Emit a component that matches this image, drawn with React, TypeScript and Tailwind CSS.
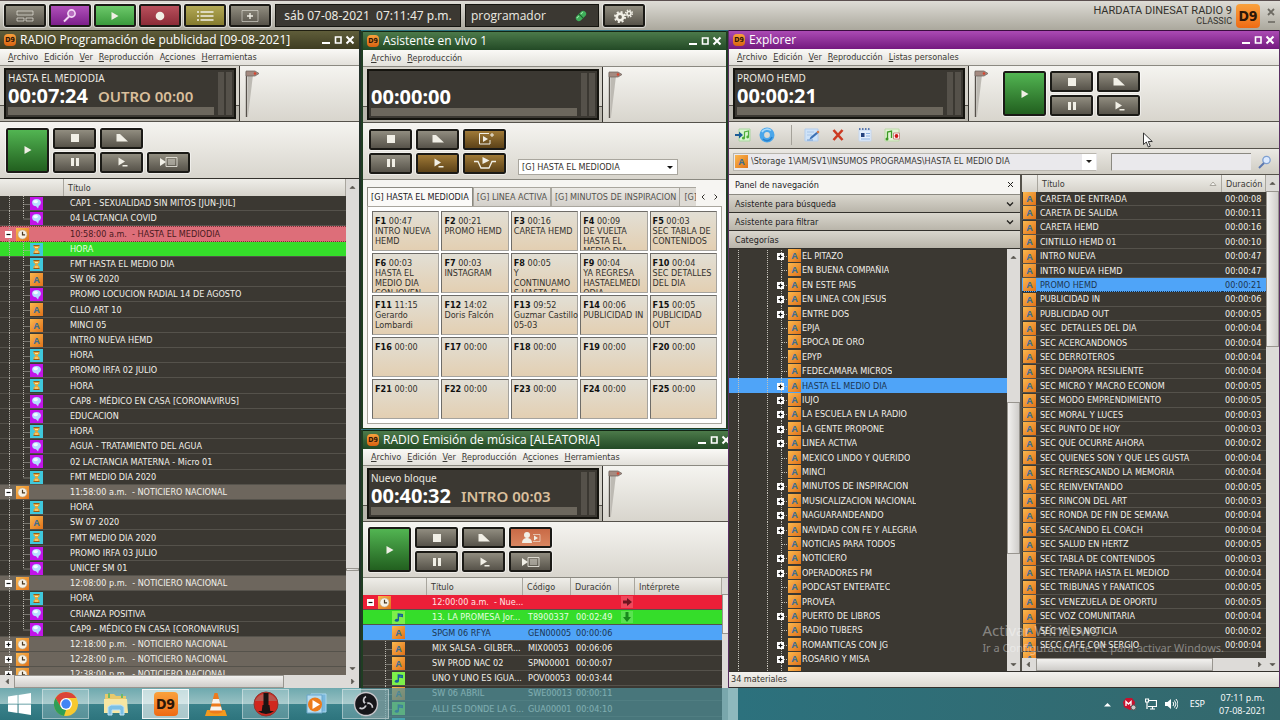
import React from "react";

const TAHOMA = "font-['DejaVu_Sans_Condensed','DejaVu_Sans',sans-serif]";
const SEGOE = "font-['Noto_Sans','Open_Sans',sans-serif]";

type Kind = "a" | "talk" | "hour" | "clock" | "music";

/* ---------- small drawings ---------- */

function Badge({ kind, x = 0, y = 0 }: { kind: Kind; x?: number; y?: number }) {
  const fill = { a: "url(#gOrange)", clock: "url(#gOrange)", talk: "#c214e8", hour: "#3fc8dc", music: "#7df04a" }[kind];
  return (
    <g transform={`translate(${x} ${y})`}>
      <rect width="13" height="13" fill={fill} />
      {kind === "a" && (
        <text x="6.5" y="10" textAnchor="middle" fontSize="9" fontWeight="700" fill="#3f6e92" fontFamily="Open Sans, sans-serif">
          A
        </text>
      )}
      {kind === "talk" && (
        <>
          <ellipse cx="6.5" cy="5.6" rx="4.4" ry="3.7" fill="#b4dcff" />
          <path d="M5.500 8.500h3.500l-1 3z" fill="#b4dcff" />
          <ellipse cx="5.6" cy="4.600" rx="2.400" ry="1.700" fill="#f2fbff" />
        </>
      )}
      {kind === "hour" && (
        <>
          <path d="M3.5 2.5h6v2L7.4 6.5l2.1 2v2h-6v-2l2.1-2-2.1-2z" fill="#e8a63a" />
          <path d="M3.5 2.5h6M3.5 10.5h6" stroke="#9a5a14" />
          <path d="M5 4.5h3M5 9h3" stroke="#ffe59a" />
        </>
      )}
      {kind === "clock" && (
        <>
          <circle cx="6.5" cy="6.5" r="4.5" fill="#f6f1e6" stroke="#b9a98c" strokeWidth=".6" />
          <path d="M6.5 3.8v3h2.6" stroke="#4a3820" strokeWidth="1.2" fill="none" />
        </>
      )}
      {kind === "music" && (
        <>
          <ellipse cx="4.8" cy="9.2" rx="2" ry="1.5" fill="#17609a" />
          <path d="M6.3 9V3l4 .5v2L7 4.8" stroke="#17609a" strokeWidth="1.4" fill="none" />
        </>
      )}
    </g>
  );
}

function SharedGradients() {
  return (
    <svg width="0" height="0" className="absolute" aria-hidden="true">
      <defs>
        <linearGradient id="gOrange" x1="0" y1="0" x2="1" y2="1">
          <stop offset="0" stopColor="#fbb84e" />
          <stop offset="1" stopColor="#e0721a" />
        </linearGradient>
      </defs>
    </svg>
  );
}

function Expander({ x, y, open }: { x: number; y: number; open: boolean }) {
  return (
    <g transform={`translate(${x} ${y})`}>
      <rect width="7" height="7" fill="#fff" />
      <path d={open ? "M1.5 3.5h4" : "M1.5 3.5h4M3.5 1.5v4"} stroke="#111" strokeWidth="1.2" />
    </g>
  );
}

function D9({ big = false }: { big?: boolean }) {
  return (
    <span
      aria-hidden="true"
      className={
        big
          ? "flex size-6 items-center justify-center rounded-sm bg-linear-to-b from-[#f9a13c] to-[#ef6a12] text-sm leading-4 font-bold text-[#2b1608] font-['DejaVu_Sans_Condensed',sans-serif]"
          : "flex size-3 items-center justify-center rounded-sm bg-linear-to-b from-[#f9a13c] to-[#d8620f] text-[7px] leading-3 font-bold text-[#2b1608] font-['DejaVu_Sans_Condensed',sans-serif]"
      }
    >
      D9
    </span>
  );
}

function Glyph({ name }: { name: string }) {
  const c = "#f1efe6";
  return (
    <svg width="24" height="16" viewBox="0 0 24 16" fill="none" aria-hidden="true">
      {name === "play" && <path d="M8.5 4l7 4-7 4z" fill={c} />}
      {name === "stop" && <path d="M8 4h8v8H8z" fill={c} />}
      {name === "fade" && <path d="M6.500 4l3.500 0 8 7.500H6.500z" fill={c} />}
      {name === "pause" && <path d="M8 4h3v8H8zM13 4h3v8h-3z" fill={c} />}
      {name === "next" && <path d="M8.500 3.500l6.500 4-6.500 4zM12.500 11h5v1.500h-5z" fill={c} />}
      {name === "list" && (
        <>
          <path d="M3 4l6 4-6 4z" fill={c} />
          <path d="M9 3.500h11v9H9zM11 6h7M11 8h7M11 10h7" stroke={c} strokeOpacity=".8" />
        </>
      )}
      {name === "frame" && (
        <>
          <path d="M16 2.500H6.500v10.500h10.500V9" stroke={c} />
          <path d="M10 5l5 3-5 3z" fill={c} />
          <path d="M17 4h4M19 2v4" stroke={c} />
        </>
      )}
      {name === "duck" && (
        <>
          <path d="M1 6.500h4l3 6.500h8l3-6.500h4" stroke={c} strokeWidth="1.300" />
          <path d="M9.500 2l7 3.500-7 3.500z" fill={c} />
        </>
      )}
      {name === "voice" && (
        <>
          <circle cx="8" cy="5" r="3" fill={c} />
          <path d="M3 13c0-4 3-5 5-5s5 1 5 5z" fill={c} />
          <path d="M14 4.500h7v7h-7" stroke={c} strokeOpacity=".6" />
          <path d="M15 5.500l4 2.500-4 2.500z" fill={c} />
        </>
      )}
      {name === "layout" && <path d="M4 3h16v4H4zM4 10h7v3H4zM13 10h7v3h-7z" stroke={c} strokeOpacity=".65" />}
      {name === "search" && (
        <>
          <circle cx="13.500" cy="5.500" r="3.600" stroke="#f3d9f5" strokeWidth="1.600" fill="#b86cc0" />
          <path d="M11 8.500l-5 5" stroke="#f3d9f5" strokeWidth="2" />
        </>
      )}
      {name === "record" && <circle cx="12" cy="8" r="4.300" fill={c} />}
      {name === "lines" && <path d="M4 4h2M4 8h2M4 12h2M7.500 4h13M7.500 8h13M7.500 12h13" stroke={c} strokeWidth="1.500" />}
      {name === "plus" && (
        <>
          <path d="M4 2.500h16v11H4z" stroke={c} strokeOpacity=".55" />
          <path d="M9 8h6M12 5v6" stroke={c} strokeWidth="1.400" />
        </>
      )}
      {name === "gears" && (
        <>
          <circle cx="8" cy="9" r="3.200" stroke={c} strokeWidth="2.600" />
          <circle cx="8" cy="9" r="5" stroke={c} strokeWidth="2" strokeDasharray="2 1.930" />
          <circle cx="17" cy="5.500" r="2" stroke={c} strokeWidth="1.600" />
          <circle cx="17" cy="5.500" r="3.400" stroke={c} strokeWidth="1.400" strokeDasharray="1.400 1.270" />
        </>
      )}
    </svg>
  );
}

function WindowGlyph({ name }: { name: "min" | "max" | "close" }) {
  return (
    <svg width="10" height="10" viewBox="0 0 10 10" fill="none" stroke="#fff" aria-hidden="true">
      {name === "min" && <path d="M1 8h8" strokeWidth="2" />}
      {name === "max" && <path d="M2.500 2h5.500v6H2.500z" strokeWidth="1.600" />}
      {name === "close" && <path d="M1.500 1.500l7 7M8.500 1.500l-7 7" strokeWidth="2" />}
    </svg>
  );
}

function Pendulum() {
  return (
    <svg width="16" height="50" viewBox="0 0 16 50" aria-hidden="true">
      <path d="M4 6h5L4 47z" fill="#bdbab3" />
      <path d="M2.500 3v45" stroke="#55504a" strokeWidth="1.400" />
      <path d="M2 2h9l4 2.500L11 7H2z" fill="#a48a80" stroke="#6b605a" strokeWidth=".7" />
      <circle cx="11" cy="4.500" r="1.300" fill="#d8452f" />
    </svg>
  );
}

/* ---------- window parts ---------- */

const tones = {
  gray: "from-[#918d80] to-[#57534a]",
  green: "from-[#52b552] to-[#22601f]",
  lime: "from-[#6cc96a] to-[#3a9a3c]",
  purple: "from-[#b04fba] to-[#7d1f8c]",
  red: "from-[#b9505c] to-[#8c2b38]",
  olive: "from-[#b3a955] to-[#857b2e]",
  brown: "from-[#a07a37] to-[#5c4218]",
  salmon: "from-[#c96a46] to-[#d98660]",
};

function Key({ icon, label, tone = "gray", size = "h-[21px] w-[43px]" }: { icon: string; label: string; tone?: keyof typeof tones; size?: string }) {
  return (
    <button
      type="button"
      aria-label={label}
      className={`flex shrink-0 items-center justify-center rounded-xs border-2 border-[#1b1a16] bg-linear-to-b outline outline-white/50 ${tones[tone]} ${size}`}
    >
      <Glyph name={icon} />
    </button>
  );
}

const BIG = "row-span-2 h-[45px] w-[43px]";
const KEYPAD = "grid grid-flow-col grid-rows-2 gap-x-1 gap-y-[3px]";

function TitleBar({ text, color }: { text: string; color: string }) {
  return (
    <header className={`flex h-[19px] shrink-0 items-center gap-1 border-t border-black/50 bg-linear-to-b px-1 text-white ${color}`}>
      <D9 />
      <h2 className="flex-1 truncate font-['Open_Sans','Noto_Sans',sans-serif] text-xs leading-[18px]">{text}</h2>
      <div className="flex gap-0.5">
        {(["min", "max", "close"] as const).map((n) => (
          <button key={n} type="button" aria-label={{ min: "Minimizar", max: "Maximizar", close: "Cerrar" }[n]}>
            <WindowGlyph name={n} />
          </button>
        ))}
      </div>
    </header>
  );
}

function MenuBar({ items }: { items: [string, string, string][] }) {
  return (
    <nav className="flex h-[17px] shrink-0 items-center gap-1.5 border-b border-[#8b8981] bg-linear-to-b from-[#faf9f6] to-[#e3e1db] pl-2 text-[9px] leading-3 text-[#3a3935]">
      {items.map(([before, key, after]) => (
        <button key={before + key + after} type="button">
          {before}
          <u>{key}</u>
          {after}
        </button>
      ))}
    </nav>
  );
}

const radioMenu: [string, string, string][] = [
  ["", "A", "rchivo"],
  ["", "E", "dición"],
  ["", "V", "er"],
  ["", "R", "eproducción"],
  ["A", "c", "ciones"],
  ["", "H", "erramientas"],
];

function Display({ title, time, cue, children }: { title: string; time: string; cue?: string; children?: React.ReactNode }) {
  return (
    <div className="flex h-14 shrink-0 border-b border-[#55524b] bg-linear-to-b from-[#f5f4f0] to-[#d8d5cd]">
      <div className="flex w-60 shrink-0 border-r border-[#33312c] bg-[linear-gradient(#d5d2ca_0_39px,#55524b_39px_40px,#b9b6ad_40px)] py-0.5 pr-[3px] pl-1">
        <div className={`flex flex-1 gap-0.5 border-2 border-[#15140f] bg-[#3b3832] p-0.5 pt-0 ${SEGOE}`}>
          <div className="flex min-w-0 flex-1 flex-col">
            <p className="h-4 truncate text-[10px] leading-4 text-[#eceae2]">{title}</p>
            <p className="flex h-5 items-center gap-2.5 leading-5 font-bold">
              <span className="text-xl leading-5 text-white">{time}</span>
              {cue && <span className="text-[15px] leading-5 font-semibold text-[#d9bf9c]">{cue}</span>}
            </p>
            <div className="mt-auto h-2 bg-[#6c675d]" />
          </div>
          <div className="mt-0.5 ml-0.5 w-1.5 bg-[#55514a]" />
          <div className="mt-0.5 w-1.5 bg-[#55514a]" />
        </div>
      </div>
      <div className="pt-[3px] pl-1">
        <Pendulum />
      </div>
      {children}
    </div>
  );
}

function ArrowMark({ dir }: { dir: "up" | "down" | "left" | "right" }) {
  const d = { up: "M2 5.500L4.500 3 7 5.500z", down: "M2 3.500L4.500 6 7 3.500z", left: "M5.500 2L3 4.500 5.500 7z", right: "M3.500 2L6 4.500 3.500 7z" }[dir];
  return (
    <svg width="9" height="9" viewBox="0 0 9 9" aria-hidden="true">
      <path d={d} fill="#57544d" stroke="#57544d" strokeWidth=".6" />
    </svg>
  );
}

function VScroll({ before, thumb, after }: { before: string; thumb: string; after: string }) {
  return (
    <div className="flex w-[13px] shrink-0 flex-col items-center bg-[#dddbd8]">
      <div className="flex h-4 shrink-0 items-center">
        <ArrowMark dir="up" />
      </div>
      <div className={before} />
      <div className={`w-full border border-[#98958f] bg-linear-to-r from-[#f2f1ef] to-[#cfcdca] ${thumb}`} />
      <div className={after} />
      <div className="flex h-3.5 shrink-0 items-center">
        <ArrowMark dir="down" />
      </div>
    </div>
  );
}

function HScroll({ thumb, rest }: { thumb: string; rest: string }) {
  return (
    <div className="flex h-[13px] shrink-0 items-center bg-[#dddbd8]">
      <div className="flex w-3.5 shrink-0 justify-center">
        <ArrowMark dir="left" />
      </div>
      <div className={`h-full border border-[#98958f] bg-linear-to-b from-[#f2f1ef] to-[#cfcdca] ${thumb}`} />
      <div className={rest} />
      <div className="flex w-3.5 shrink-0 justify-center">
        <ArrowMark dir="right" />
      </div>
    </div>
  );
}

const TH = "border-r border-[#a9a69e] p-0 pl-1 text-left text-[9px] leading-3 font-normal text-[#3a3935]";
const THEAD = "h-[17px] bg-linear-to-b from-[#efeee9] to-[#d5d2ca]";
const ROW15 = "h-[15px] nth-[5n+3]:h-4";
const ROW14 = "h-3.5 nth-[5n+3]:h-[15px] nth-[5n]:h-[15px]";
const DARK = "bg-[#3b3832] text-[#f2f0ea]";

/* ---------- advertising schedule ---------- */

type AdRow = { kind: Kind; text: string; group?: "open" | "closed"; look?: "current" | "playing"; last?: boolean };

const ads: AdRow[] = [
  { kind: "talk", text: "CAP1 - SEXUALIDAD SIN MITOS [JUN-JUL]" },
  { kind: "talk", text: "04 LACTANCIA COVID", last: true },
  { kind: "clock", text: "10:58:00 a.m.  - HASTA EL MEDIODIA", group: "open", look: "current" },
  { kind: "hour", text: "HORA", look: "playing" },
  { kind: "hour", text: "FMT HASTA EL MEDIO DIA" },
  { kind: "a", text: "SW 06 2020" },
  { kind: "talk", text: "PROMO LOCUCION RADIAL 14 DE AGOSTO" },
  { kind: "a", text: "CLLO ART 10" },
  { kind: "a", text: "MINCI 05" },
  { kind: "a", text: "INTRO NUEVA HEMD" },
  { kind: "hour", text: "HORA" },
  { kind: "talk", text: "PROMO IRFA 02 JULIO" },
  { kind: "hour", text: "HORA" },
  { kind: "talk", text: "CAP8 - MÉDICO EN CASA [CORONAVIRUS]" },
  { kind: "talk", text: "EDUCACION" },
  { kind: "hour", text: "HORA" },
  { kind: "talk", text: "AGUA - TRATAMIENTO DEL AGUA" },
  { kind: "talk", text: "02 LACTANCIA MATERNA - Micro 01" },
  { kind: "hour", text: "FMT MEDIO DIA 2020", last: true },
  { kind: "clock", text: "11:58:00 a.m.  - NOTICIERO NACIONAL", group: "open" },
  { kind: "hour", text: "HORA" },
  { kind: "a", text: "SW 07 2020" },
  { kind: "hour", text: "FMT MEDIO DIA 2020" },
  { kind: "talk", text: "PROMO IRFA 03 JULIO" },
  { kind: "talk", text: "UNICEF SM 01", last: true },
  { kind: "clock", text: "12:08:00 p.m.  - NOTICIERO NACIONAL", group: "open" },
  { kind: "hour", text: "HORA" },
  { kind: "talk", text: "CRIANZA POSITIVA" },
  { kind: "talk", text: "CAP9 - MÉDICO EN CASA [CORONAVIRUS]", last: true },
  { kind: "clock", text: "12:18:00 p.m.  - NOTICIERO NACIONAL", group: "closed" },
  { kind: "clock", text: "12:28:00 p.m.  - NOTICIERO NACIONAL", group: "closed" },
  { kind: "clock", text: "12:38:00 p.m.  - NOTICIERO NACIONAL", group: "closed" },
];

function adRowColor(r: AdRow) {
  if (r.look === "current") return "bg-[#dd6e79] text-[#4a1a20]";
  if (r.look === "playing") return "bg-[#35dd2a] text-[#e6ffe0]";
  if (r.group) return "bg-[#6d665d] text-[#f2f0ea]";
  return DARK;
}

function AdsWindow() {
  return (
    <section className="mb-8 flex min-h-0 min-w-0 flex-col border-r-2 border-[#23302a] bg-[#dddbd8]">
      <TitleBar text="RADIO Programación de publicidad [09-08-2021]" color="from-[#5f5d3a] to-[#3f3d22]" />
      <MenuBar items={radioMenu} />
      <Display title="HASTA EL MEDIODIA" time="00:07:24" cue="OUTRO 00:00" />
      <div className="flex h-[57px] shrink-0 items-center border-b border-[#33312c] bg-linear-to-b from-[#f5f4f0] to-[#d8d5cd] pl-1.5">
        <div className={KEYPAD}>
          <Key icon="play" label="Reproducir" tone="green" size={BIG} />
          <Key icon="stop" label="Detener" />
          <Key icon="pause" label="Pausa" />
          <Key icon="fade" label="Fundir" />
          <Key icon="next" label="Siguiente" />
          <span />
          <Key icon="list" label="Reproducir lista" />
        </div>
      </div>
      <div className="flex min-h-0 flex-1">
        <div className="min-w-0 flex-1 overflow-hidden bg-[#3b3832]">
          <table className="w-full table-fixed border-separate border-spacing-0 text-[9px] leading-3">
            <colgroup>
              <col className="w-16" />
              <col />
            </colgroup>
            <thead>
              <tr className={THEAD}>
                <th className={TH} aria-label="Tipo" />
                <th className={TH}>Título</th>
              </tr>
            </thead>
            <tbody>
              {ads.map((r, i) => (
                <tr key={i} className={`${ROW15} ${adRowColor(r)}`}>
                  <td className={`p-0 ${r.look === "current" ? "border-y border-dotted border-[#7a3038]" : "border-b border-[#55524b]"}`}>
                    <svg width="64" height="13" viewBox="0 0 64 13" className="block overflow-visible" aria-hidden="true">
                      <g stroke="#b5b2aa" strokeDasharray="1 1">
                        <path d="M9.500 -1v16" />
                        {!r.group && <path d={r.last ? "M23.500 -1v8h7" : "M23.500 -1v16M23.500 7.500h7"} fill="none" />}
                      </g>
                      {r.group && <Expander x={5} y={3} open={r.group === "open"} />}
                      <Badge kind={r.kind} x={r.group ? 16 : 30} />
                    </svg>
                  </td>
                  <td className={`truncate p-0 pl-1.5 leading-3 whitespace-pre ${r.look === "current" ? "border-y border-dotted border-[#7a3038]" : "border-b border-[#55524b]"}`}>{r.text}</td>
                </tr>
              ))}
            </tbody>
          </table>
        </div>
        <VScroll before="flex-[372]" thumb="h-[3px]" after="flex-[90]" />
      </div>
      <HScroll thumb="flex-[270]" rest="flex-[62]" />
    </section>
  );
}

/* ---------- live assistant ---------- */

const pads: [string, string, string][] = [
  ["F1", "00:47", "INTRO NUEVA\nHEMD"],
  ["F2", "00:21", "PROMO HEMD"],
  ["F3", "00:16", "CARETA HEMD"],
  ["F4", "00:09", "DE VUELTA\nHASTA EL\nMEDIO DIA"],
  ["F5", "00:03", "SEC TABLA DE\nCONTENIDOS"],
  ["F6", "00:03", "HASTA EL\nMEDIO DIA\nCON JOVEN"],
  ["F7", "00:03", "INSTAGRAM"],
  ["F8", "00:05", "Y\nCONTINUAMO\nS HASTA EL"],
  ["F9", "00:04", "YA REGRESA\nHASTAELMEDI\nODIA"],
  ["F10", "00:04", "SEC DETALLES\nDEL DIA"],
  ["F11", "11:15", "Gerardo\nLombardi"],
  ["F12", "14:02", "Doris Falcón"],
  ["F13", "09:52", "Guzmar Castillo\n05-03"],
  ["F14", "00:06", "PUBLICIDAD IN"],
  ["F15", "00:05", "PUBLICIDAD\nOUT"],
  ...Array.from({ length: 10 }, (_, i): [string, string, string] => [`F${16 + i}`, "00:00", ""]),
];

function AssistantWindow() {
  const tab = "shrink-0 border border-b-0 border-[#a9a69e] bg-linear-to-b from-[#eceae6] to-[#d3d0ca] px-[3px] text-[#55534e]";
  return (
    <section className="mt-px flex shrink-0 flex-col border-x-2 border-b border-[#1f3d22] bg-[#f6f5f2]">
      <TitleBar text="Asistente en vivo 1" color="from-[#4c7a4a] to-[#234a26]" />
      <MenuBar items={[["", "A", "rchivo"], ["", "R", "eproducción"]]} />
      <Display title="" time="00:00:00" />
      <div className="flex h-[57px] shrink-0 items-center gap-3 border-b border-[#8b8981] bg-linear-to-b from-[#f5f4f0] to-[#d8d5cd] pl-1.5">
        <div className={KEYPAD}>
          <Key icon="stop" label="Detener" />
          <Key icon="pause" label="Pausa" />
          <Key icon="fade" label="Fundir" />
          <Key icon="next" label="Siguiente" tone="brown" />
          <Key icon="frame" label="Agregar" tone="brown" />
          <Key icon="duck" label="Atenuar" tone="brown" />
        </div>
        <div className="mb-1 grid w-40 self-end">
          <select aria-label="Grupo" className="col-start-1 row-start-1 h-4 w-full appearance-none border border-[#a9a69e] bg-white pl-[3px] text-[9px] leading-3 text-[#33312c]">
            <option>[G] HASTA EL MEDIODIA</option>
          </select>
          <svg width="8" height="5" viewBox="0 0 8 5" className="pointer-events-none col-start-1 row-start-1 mr-1 self-center justify-self-end" aria-hidden="true">
            <path d="M1 1h6L4 4z" fill="#111" />
          </svg>
        </div>
      </div>
      <div className="flex flex-col px-1 pt-[7px] pb-1 text-[9px]">
        <div className="flex h-[19px] overflow-hidden leading-3" role="tablist">
          <button type="button" role="tab" aria-selected="true" className="shrink-0 border border-b-0 border-[#8b8981] bg-[#fbfaf8] px-[3px] text-[#22211e]">
            [G] HASTA EL MEDIODIA
          </button>
          <button type="button" role="tab" aria-selected="false" className={tab}>
            [G] LINEA ACTIVA
          </button>
          <button type="button" role="tab" aria-selected="false" className={tab}>
            [G] MINUTOS DE INSPIRACION
          </button>
          <button type="button" role="tab" aria-selected="false" className="w-4 min-w-0 overflow-hidden border-t border-[#a9a69e] bg-[#dedbd5] pl-1 text-left text-[#55534e]">
            [G]
          </button>
          <div className="flex flex-1 items-center justify-around">
            <button type="button" aria-label="Anterior">
              <svg width="6" height="8" viewBox="0 0 6 8" fill="none" aria-hidden="true"><path d="M4.500 1.500L2 4l2.500 2.500" stroke="#33312c" /></svg>
            </button>
            <button type="button" aria-label="Siguiente">
              <svg width="6" height="8" viewBox="0 0 6 8" fill="none" aria-hidden="true"><path d="M1.500 1.500L4 4 1.500 6.500" stroke="#33312c" /></svg>
            </button>
          </div>
        </div>
        <div className="grid auto-rows-[40px] grid-cols-5 gap-0.5 border border-[#a9a69e] bg-white p-1">
          {pads.map(([key, time, text]) => (
            <button
              key={key}
              type="button"
              className="flex flex-col overflow-y-clip border border-t-[#6e6c68] border-r-[#a5a39e] border-b-[#a5a39e] border-l-[#6e6c68] bg-linear-to-b from-[#e2dfd5] to-[#e3cfb2] pt-1 pl-0.5 text-left leading-[10px] text-[#33312c]"
            >
              <span className="whitespace-pre">
                <b className="text-[#111]">{key}</b> {time}
              </span>
              <span className="whitespace-pre">{text}</span>
            </button>
          ))}
        </div>
      </div>
    </section>
  );
}

/* ---------- music playout ---------- */

type Song = { kind: Kind; title: string; code: string; time: string; color: string; mark?: "right" | "down"; guide?: boolean };

const songs: Song[] = [
  { kind: "clock", title: "12:00:00 a.m.  - Nue...", code: "", time: "", color: "bg-[#ec1f38] text-[#ffe3e3]", mark: "right" },
  { kind: "music", title: "13. LA PROMESA Jor...", code: "T8900337", time: "00:02:49", color: "bg-[#35dd2a] text-[#e6ffe0]", mark: "down" },
  { kind: "a", title: "SPGM 06 RFYA", code: "GEN00005", time: "00:00:06", color: "bg-[#4fa4f8] text-[#1c3550]" },
  { kind: "a", title: "MIX SALSA - GILBER...", code: "MIX00053", time: "00:06:06", color: DARK, guide: true },
  { kind: "a", title: "SW PROD NAC 02", code: "SPN00001", time: "00:00:07", color: DARK, guide: true },
  { kind: "music", title: "UNO Y UNO ES IGUA...", code: "POV00053", time: "00:03:44", color: DARK, guide: true },
  { kind: "a", title: "SW 06 ABRIL", code: "SWE00013", time: "00:00:11", color: DARK, guide: true },
  { kind: "music", title: "ALLI ES DONDE LA G...", code: "GUA00001", time: "00:04:10", color: DARK, guide: true },
  { kind: "hour", title: "", code: "", time: "", color: DARK, guide: true },
];

function MusicWindow() {
  const td = "border-b border-[#55524b] p-0 pl-[5px] leading-3 whitespace-pre";
  return (
    <section className="mt-px -mr-[7px] flex min-h-0 flex-1 flex-col overflow-hidden border-l-2 border-[#1f3d22] bg-[#dddbd8]">
      <TitleBar text="RADIO Emisión de música [ALEATORIA]" color="from-[#4c7a4a] to-[#234a26]" />
      <MenuBar items={radioMenu} />
      <Display title="Nuevo bloque" time="00:40:32" cue="INTRO 00:03" />
      <div className="flex h-14 shrink-0 items-center border-b border-[#8b8981] bg-linear-to-b from-[#f5f4f0] to-[#d8d5cd] pl-[5px]">
        <div className={KEYPAD}>
          <Key icon="play" label="Reproducir" tone="green" size={BIG} />
          <Key icon="stop" label="Detener" />
          <Key icon="pause" label="Pausa" />
          <Key icon="fade" label="Fundir" />
          <Key icon="next" label="Siguiente" />
          <Key icon="voice" label="Locutor" tone="salmon" />
          <Key icon="list" label="Reproducir lista" />
        </div>
      </div>
      <div className="flex min-h-0 flex-1">
        <div className="min-w-0 flex-1 overflow-hidden bg-[#3b3832]">
          <table className="w-full table-fixed border-separate border-spacing-0 text-[9px] leading-3">
            <colgroup>
              <col className="w-16" />
              <col className="w-24" />
              <col className="w-12" />
              <col className="w-12" />
              <col className="w-4" />
              <col />
            </colgroup>
            <thead>
              <tr className={THEAD}>
                <th className={TH} aria-label="Tipo" />
                <th className={TH}>Título</th>
                <th className={TH}>Código</th>
                <th className={TH}>Duración</th>
                <th className={TH} aria-label="Estado" />
                <th className={TH}>Intérprete</th>
              </tr>
            </thead>
            <tbody>
              {songs.map((s, i) => (
                <tr key={i} className={`${ROW15} ${s.color}`}>
                  <td className="border-b border-[#55524b] p-0">
                    <svg width="63" height="13" viewBox="0 0 63 13" className="block overflow-visible" aria-hidden="true">
                      {s.guide && <path d="M22.500 -1v16M22.500 7.500h7" stroke="#b5b2aa" strokeDasharray="1 1" />}
                      {s.kind === "clock" && <Expander x={4} y={3} open />}
                      <Badge kind={s.kind} x={s.kind === "clock" ? 15 : 29} />
                    </svg>
                  </td>
                  <td className={td}>{s.title}</td>
                  <td className={td}>{s.code}</td>
                  <td className={td}>{s.time}</td>
                  <td className="border-b border-[#55524b] p-0">
                    {s.mark && (
                      <svg width="15" height="12" viewBox="0 0 15 12" className="block" aria-hidden="true">
                        <path d="M2 0h12v12H2z" fill="#fff" fillOpacity=".18" />
                        <path
                          d={s.mark === "right" ? "M4 4.500h4V2l5 4-5 4V7.500H4z" : "M6.500 1h3v5h2.500l-4 5-4-5h2.500z"}
                          fill={s.mark === "right" ? "#6d1420" : "#178a1c"}
                        />
                      </svg>
                    )}
                  </td>
                  <td className={td} />
                </tr>
              ))}
            </tbody>
          </table>
        </div>
        <div className="w-[13px] bg-[#dddbd8] pt-4">
          <div className="h-10 border border-[#98958f] bg-[#eeedeb]" />
        </div>
      </div>
    </section>
  );
}

/* ---------- explorer ---------- */

const categories = [
  "+EL PITAZO", "-EN BUENA COMPAÑIA", "+EN ESTE PAIS", "+EN LINEA CON JESUS", "+ENTRE DOS", "-EPJA", "-EPOCA DE ORO", "-EPYP",
  "-FEDECAMARA MICROS", "+HASTA EL MEDIO DIA", "+IUJO", "+LA ESCUELA EN LA RADIO", "+LA GENTE PROPONE", "+LINEA ACTIVA",
  "-MEXICO LINDO Y QUERIDO", "-MINCI", "+MINUTOS DE INSPIRACION", "+MUSICALIZACION NACIONAL", "+NAGUARANDEANDO",
  "+NAVIDAD CON FE Y ALEGRIA", "-NOTICIAS PARA TODOS", "+NOTICIERO", "+OPERADORES FM", "-PODCAST ENTERATEC", "-PROVEA",
  "+PUERTO DE LIBROS", "-RADIO TUBERS", "+ROMANTICAS CON JG", "+ROSARIO Y MISA", "-",
];

const materials: [string, string][] = [
  ["CARETA DE ENTRADA", "08"], ["CARETA DE SALIDA", "11"], ["CARETA HEMD", "16"], ["CINTILLO HEMD 01", "10"], ["INTRO NUEVA", "47"],
  ["INTRO NUEVA HEMD", "47"], ["PROMO HEMD", "21"], ["PUBLICIDAD IN", "06"], ["PUBLICIDAD OUT", "05"], ["SEC  DETALLES DEL DIA", "04"],
  ["SEC ACERCANDONOS", "04"], ["SEC DERROTEROS", "04"], ["SEC DIAPORA RESILIENTE", "04"], ["SEC MICRO Y MACRO ECONOM", "05"],
  ["SEC MODO EMPRENDIMIENTO", "05"], ["SEC MORAL Y LUCES", "03"], ["SEC PUNTO DE HOY", "03"], ["SEC QUE OCURRE AHORA", "02"],
  ["SEC QUIENES SON Y QUE LES GUSTA", "04"], ["SEC REFRESCANDO LA MEMORIA", "04"], ["SEC REINVENTANDO", "05"], ["SEC RINCON DEL ART", "03"],
  ["SEC RONDA DE FIN DE SEMANA", "04"], ["SEC SACANDO EL COACH", "04"], ["SEC SALUD EN HERTZ", "05"], ["SEC TABLA DE CONTENIDOS", "03"],
  ["SEC TERAPIA HASTA EL MEDIOD", "04"], ["SEC TRIBUNAS Y FANATICOS", "05"], ["SEC VENEZUELA DE OPORTU", "05"], ["SEC VOZ COMUNITARIA", "04"],
  ["SEC YA ES NOTICIA", "02"], ["SECC CAFE CON SERGIO", "04"],
];

function ToolIcon({ name }: { name: string }) {
  return (
    <svg width="16" height="16" viewBox="0 0 16 16" fill="none" aria-hidden="true">
      {name === "import" && (
        <>
          <path d="M4 2h11v12H4z" fill="#d9f5cf" stroke="#a9d6a0" />
          <path d="M9.500 11V5l4-1v6" stroke="#4fae3c" strokeWidth="1.200" />
          <circle cx="8.500" cy="11" r="1.600" fill="#4fae3c" />
          <circle cx="12.700" cy="10" r="1.400" fill="#4fae3c" />
          <path d="M0 7h4V4.500L8 8l-4 3.500V9H0z" fill="#1d5c96" />
        </>
      )}
      {name === "refresh" && (
        <>
          <circle cx="8" cy="8" r="5.200" stroke="#4aa6ea" strokeWidth="4.600" />
          <path d="M3 5a6 6 0 0 1 9-1.500" stroke="#a8dafc" strokeWidth="1.600" />
          <path d="M13 10a5.500 5.500 0 0 1-9 2" stroke="#2780cc" strokeWidth="1.600" />
        </>
      )}
      {name === "edit" && (
        <>
          <path d="M1 2h13v12H1z" fill="#cfe3f8" stroke="#b3cdec" />
          <path d="M3 5h7M3 8h5" stroke="#a8c5e8" />
          <path d="M3 13h6" stroke="#6a98d2" />
          <path d="M5.500 12.500l1-2.500 6-5 1.500 1.500-6 5z" fill="#3c70b4" />
          <path d="M12.500 5l1.500-1.500 1.500 1.500L14 6.500z" fill="#d8743b" />
        </>
      )}
      {name === "delete" && <path d="M3.500 3l9 10M12.500 3l-9 10" stroke="#cc3a22" strokeWidth="2.600" />}
      {name === "props" && (
        <>
          <path d="M2 3h12v11H2z" fill="#e3eefc" stroke="#c4d6ee" />
          <path d="M2 2h12" stroke="#2d57a0" strokeWidth="1.400" strokeDasharray="1.500 1.500" />
          <path d="M4 6h3.500v4H4z" fill="#24437f" />
          <path d="M9 6.500h4M9 9h4M4 12h9" stroke="#8cb2e2" />
        </>
      )}
      {name === "rec" && (
        <>
          <path d="M1 2h14v12H1z" fill="#e2f4d4" stroke="#bcd9a8" />
          <path d="M3.500 12V5l4-1v7" stroke="#3c9a24" strokeWidth="1.300" />
          <circle cx="3" cy="12" r="1.500" fill="#3c9a24" />
          <path d="M9.500 6h6v6h-6z" fill="#fff" stroke="#c98a8a" />
          <circle cx="12.500" cy="9" r="1.900" fill="#d01818" />
        </>
      )}
    </svg>
  );
}

function NavHeading({ text, chevron }: { text: string; chevron?: boolean }) {
  return (
    <button type="button" className="flex h-[18px] shrink-0 items-center justify-between border-b border-[#33312c] bg-linear-to-b from-[#d9d6cd] to-[#b9b5aa] px-1.5 text-left">
      {text}
      {chevron && (
        <svg width="8" height="6" viewBox="0 0 8 6" fill="none" aria-hidden="true">
          <path d="M1 1.500l3 3 3-3" stroke="#22211e" strokeWidth="1.300" />
        </svg>
      )}
    </button>
  );
}

function ExplorerWindow() {
  const tool = "flex size-5 items-center justify-center";
  return (
    <section className="mb-8 flex min-h-0 min-w-0 flex-col border-x border-[#5a2f63] bg-[#dddbd8]">
      <TitleBar text="Explorer" color="from-[#ab4ab4] to-[#74187f]" />
      <MenuBar items={[["", "A", "rchivo"], ["", "E", "dición"], ["", "V", "er"], ["", "R", "eproducción"], ["", "L", "istas personales"]]} />
      <Display title="PROMO HEMD" time="00:00:21">
        <div className="self-center pl-3.5">
          <div className={KEYPAD}>
            <Key icon="play" label="Reproducir" tone="green" size={BIG} />
            <Key icon="stop" label="Detener" />
            <Key icon="pause" label="Pausa" />
            <Key icon="fade" label="Fundir" />
            <Key icon="next" label="Siguiente" />
          </div>
        </div>
      </Display>
      <div className="flex h-[27px] shrink-0 items-center gap-1 border-b border-[#55524b] bg-linear-to-b from-[#ebe9e4] to-[#cfccc3] pl-1">
        <button type="button" aria-label="Importar" className={tool}><ToolIcon name="import" /></button>
        <button type="button" aria-label="Actualizar" className={tool}><ToolIcon name="refresh" /></button>
        <span className="mr-1.5 ml-2.5 h-5 w-px bg-[#a5a29a]" />
        <button type="button" aria-label="Editar" className={tool}><ToolIcon name="edit" /></button>
        <div className="flex gap-[7px] pl-0.5">
          <button type="button" aria-label="Eliminar" className={tool}><ToolIcon name="delete" /></button>
          <button type="button" aria-label="Propiedades" className={tool}><ToolIcon name="props" /></button>
          <button type="button" aria-label="Grabar" className={tool}><ToolIcon name="rec" /></button>
        </div>
      </div>
      <div className="flex h-[26px] shrink-0 items-center border-b border-[#55524b] bg-linear-to-b from-[#ebe9e4] to-[#cfccc3] pl-1">
        <div className="flex h-[18px] min-w-0 flex-[363] items-center border border-[#b9b6ae] border-r-transparent bg-[#eae9ec]">
          <svg width="15" height="13" viewBox="0 0 15 13" className="shrink-0" aria-hidden="true">
            <Badge kind="a" x={1} />
          </svg>
          <input
            aria-label="Ruta"
            defaultValue="\Storage 1\AM/SV1\INSUMOS PROGRAMAS\HASTA EL MEDIO DIA"
            className="min-w-0 flex-1 bg-transparent pl-0.5 text-[9px] text-[#3a3935]"
          />
          <button type="button" aria-label="Abrir rutas" className="flex h-full w-3.5 items-center justify-center bg-white">
            <svg width="8" height="5" viewBox="0 0 8 5" aria-hidden="true"><path d="M1 1h6L4 4z" fill="#22211e" /></svg>
          </button>
        </div>
        <input aria-label="Buscar" className="ml-3.5 h-[18px] min-w-0 flex-[140] border border-r-0 border-t-[#8b8981] border-b-[#d5d2ca] border-l-[#8b8981] bg-[#eae9ec] text-[9px]" />
        <button type="button" aria-label="Iniciar búsqueda" className="flex w-7 justify-center">
          <svg width="14" height="14" viewBox="0 0 14 14" aria-hidden="true">
            <circle cx="8.500" cy="5" r="3.700" fill="#dceaff" stroke="#7e9fd0" strokeWidth="1.300" />
            <path d="M6 8l-5 5" stroke="#5d79b0" strokeWidth="2" />
          </svg>
        </button>
      </div>

      <div className="flex min-h-0 flex-1 border-b border-[#33312c]">
        <aside className="flex min-w-0 flex-[292] flex-col text-[9px] leading-3 text-[#22211e]">
          <div className="flex h-5 shrink-0 items-center justify-between border-b border-[#8b8981] bg-[#f6f5f2] px-1.5">
            <h3>Panel de navegación</h3>
            <button type="button" aria-label="Cerrar panel">
              <svg width="7" height="7" viewBox="0 0 7 7" aria-hidden="true"><path d="M1 1l5 5M6 1L1 6" stroke="#22211e" /></svg>
            </button>
          </div>
          <NavHeading text="Asistente para búsqueda" chevron />
          <NavHeading text="Asistente para filtrar" chevron />
          <NavHeading text="Categorías" />
          <div className="flex min-h-0 flex-1">
            <ul className="min-w-0 flex-1 overflow-hidden bg-[#3b3832] text-[#f2f0ea]">
              {categories.map((c) => (
                <li key={c} className={`flex items-center ${ROW14} ${c === "+HASTA EL MEDIO DIA" ? "bg-[#4fa4f8] text-[#1c3550]" : ""}`}>
                  <svg width="73" height="14" viewBox="0 0 73 14" className="shrink-0 overflow-visible" aria-hidden="true">
                    <path d="M9.500 -1v16M38.500 -1v16M52.500 -1v16M53 7.500h6" stroke="#c4c1b9" strokeDasharray="1 1" />
                    {c[0] === "+" && <Expander x={48} y={4} open={false} />}
                    <Badge kind="a" x={59} />
                  </svg>
                  <span className="truncate leading-3">{c.slice(1)}</span>
                </li>
              ))}
            </ul>
            <VScroll before="flex-[138]" thumb="flex-[150]" after="flex-[104]" />
          </div>
        </aside>

        <div className="flex min-w-0 flex-[258] border-l-2 border-[#55524b]">
          <div className="flex min-w-0 flex-1 flex-col">
            <div className="min-h-0 flex-1 overflow-hidden bg-[#3b3832]">
              <table className="w-full table-fixed border-separate border-spacing-0 text-[9px] leading-3">
                <colgroup>
                  <col className="w-4" />
                  <col />
                  <col className="w-11" />
                </colgroup>
                <thead>
                  <tr className={THEAD}>
                    <th className={TH} aria-label="Tipo" />
                    <th className={TH}>
                      <span className="flex items-center justify-between pr-1">
                        Título
                        <svg width="8" height="5" viewBox="0 0 8 5" aria-hidden="true"><path d="M1 4.500h6L4 1z" fill="#f6f5f2" stroke="#a9a69e" /></svg>
                      </span>
                    </th>
                    <th className={TH}>Duración</th>
                  </tr>
                </thead>
                <tbody>
                  {materials.map(([name, sec]) => {
                    const sel = name === "PROMO HEMD";
                    const line = sel ? "border-b border-dotted border-[#16324e]" : "border-b border-[#55524b]";
                    return (
                      <tr key={name} className={`${ROW14} ${sel ? "bg-[#4fa4f8] text-[#1c3550]" : DARK}`}>
                        <td className={`p-0 ${line}`}>
                          <svg width="15" height="13" viewBox="0 0 15 13" className="block" aria-hidden="true"><Badge kind="a" x={1} /></svg>
                        </td>
                        <td className={`truncate p-0 pl-0.5 leading-3 whitespace-pre ${line}`}>{name}</td>
                        <td className={`p-0 pl-[3px] leading-3 ${line}`}>00:00:{sec}</td>
                      </tr>
                    );
                  })}
                  <tr className={DARK}>
                    <td className="p-0" colSpan={3}>
                      <svg width="15" height="13" viewBox="0 0 15 13" className="block" aria-hidden="true"><Badge kind="a" x={1} /></svg>
                    </td>
                  </tr>
                </tbody>
              </table>
            </div>
            <HScroll thumb="flex-[177]" rest="flex-[40]" />
          </div>
          <VScroll before="h-0" thumb="flex-[155]" after="flex-[312]" />
        </div>
      </div>
      <footer className="flex h-4 shrink-0 items-center border-b border-[#33312c] bg-linear-to-b from-[#f3f2ee] to-[#dddad2] pl-0.5 text-[9px] text-[#33312c]">34 materiales</footer>
    </section>
  );
}

/* ---------- top bar and taskbar ---------- */

function TopBar() {
  const size = "h-[23px] w-[42px]";
  return (
    <header className={`flex h-[30px] shrink-0 items-center border-t border-[#5b4f4f] bg-linear-to-b from-[#dedcd6] to-[#aba89d] pl-1 text-xs ${SEGOE}`}>
      <div className="flex gap-[3px]">
        <Key icon="layout" label="Diseño" size={size} />
        <Key icon="search" label="Explorador" tone="purple" size={size} />
        <Key icon="play" label="Emisión" tone="lime" size={size} />
        <Key icon="record" label="Grabación" tone="red" size={size} />
        <Key icon="lines" label="Listas" tone="olive" size={size} />
        <Key icon="plus" label="Nuevo" size={size} />
      </div>
      <p className="ml-1 flex h-[23px] w-[186px] items-center justify-center border border-[#15140f] bg-[#3b3832] leading-4 whitespace-pre text-[#eceae2]">sáb 07-08-2021  07:11:47 p.m.</p>
      <p className="ml-1 flex h-[23px] w-[134px] items-center justify-between border border-[#15140f] bg-[#3b3832] pr-2.5 pl-[5px] font-['Open_Sans','Noto_Sans',sans-serif] leading-4 text-[#eceae2]">
        programador
        <svg width="14" height="14" viewBox="0 0 14 14" aria-hidden="true">
          <g transform="rotate(45 7 7)">
            <rect x="4" y="1" width="6" height="12" rx="3" fill="#3fae5a" />
            <path d="M4 7h6" stroke="#1d5c2c" />
            <path d="M5.500 3v3M5.500 8.500v3" stroke="#a3ecb0" />
          </g>
        </svg>
      </p>
      <div className="ml-1">
        <Key icon="gears" label="Configuración" size={size} />
      </div>
      <div className="ml-auto text-right font-['Liberation_Sans_Narrow','Roboto',sans-serif] text-[#33312c]">
        <p className="text-[11px] leading-3">HARDATA DINESAT RADIO 9</p>
        <p className="text-[9px] leading-[9px]">CLASSIC</p>
      </div>
      <div className="ml-1"><D9 big /></div>
      <div className="flex w-5 flex-col items-center gap-1 pl-0.5">
        <button type="button" aria-label="Cerrar aplicación">
          <svg width="8" height="8" viewBox="0 0 8 8" className="block" aria-hidden="true"><path d="M1 1l6 6M7 1L1 7" stroke="#6d6a62" strokeWidth="1.800" /></svg>
        </button>
        <button type="button" aria-label="Minimizar aplicación">
          <svg width="8" height="4" viewBox="0 0 8 4" className="block" aria-hidden="true"><path d="M1 2h7" stroke="#6d6a62" strokeWidth="1.600" /></svg>
        </button>
      </div>
    </header>
  );
}

function AppIcon({ name }: { name: string }) {
  return (
    <svg width="26" height="26" viewBox="0 0 26 26" fill="none" aria-hidden="true">
      {name === "Chrome" && (
        <>
          <circle cx="13" cy="13" r="12" fill="#f7c92f" />
          <path d="M13 7h10.400A12 12 0 0 0 2.600 7l5 9z" fill="#db4437" />
          <path d="M2.600 7l5.200 9 5.200 3-2 6A12 12 0 0 1 2.600 7z" fill="#2f9e55" />
          <circle cx="13" cy="13" r="6" fill="#fff" />
          <circle cx="13" cy="13" r="4.700" fill="#4285f4" />
        </>
      )}
      {name === "Archivos" && (
        <>
          <path d="M2 3h9l2 2h10v17H2z" fill="#e8c96b" />
          <path d="M1 8h23l1 14H1z" fill="#f7e6a2" />
          <path d="M5 2h2v5H5zM18 3h2v4h-2z" fill="#6db96b" />
          <path d="M5 24v-8l3-2h10l3 2v8h-4v-5H9v5z" fill="#7cc0e6" stroke="#bfe3f6" />
        </>
      )}
      {name === "VLC" && (
        <>
          <path d="M4 19h18l2 6H2z" fill="#f39a1e" />
          <path d="M11.500 2h3l5 19c-4 2-9 2-13 0z" fill="#ee7a1c" />
          <path d="M10 8h6l1.200 4.500H8.800zM8 15.500h10l1 4H7z" fill="#f7f4ef" />
        </>
      )}
      {name === "Monitor" && (
        <>
          <circle cx="13" cy="13" r="12" fill="#d0271e" stroke="#8d3630" />
          <path d="M2 10a12 12 0 0 1 22 0z" fill="#b9564e" />
          <path d="M10.500 2h5v13h-5zM9.500 14h7l1 8h-9z" fill="#191413" />
          <path d="M5 20h16a12 12 0 0 1-16 0z" fill="#191413" />
        </>
      )}
      {name === "Reproductor" && (
        <>
          <path d="M8 3h15v18H8z" fill="#79b8dd" stroke="#a9d6ee" />
          <path d="M4 4h15v18H4z" fill="#b5dcf0" stroke="#6aa6ca" />
          <circle cx="12" cy="13.500" r="7" fill="#ec7b1c" />
          <path d="M9.500 9l7.500 4.500L9.500 18z" fill="#fff" />
        </>
      )}
      {name === "OBS" && (
        <>
          <circle cx="13" cy="13" r="11.500" fill="#17161a" stroke="#c8c6cb" strokeWidth="1.400" />
          <g stroke="#cfced3" strokeWidth="1.700">
            <path d="M13 13c-3.500-2-3-6 0-7.500" />
            <path d="M13 13c-3.500-2-3-6 0-7.500" transform="rotate(120 13 13)" />
            <path d="M13 13c-3.500-2-3-6 0-7.500" transform="rotate(240 13 13)" />
          </g>
          <circle cx="13" cy="13" r="1.500" fill="#17161a" />
        </>
      )}
    </svg>
  );
}

function Taskbar() {
  const apps: [string, boolean][] = [["Chrome", true], ["Archivos", false], ["Dinesat", true], ["VLC", false], ["Monitor", true], ["Reproductor", false], ["OBS", true]];
  return (
    <footer className={`absolute inset-x-0 bottom-0 z-10 grid h-8 grid-cols-[361fr_367fr_552fr] ${SEGOE}`}>
      <div className="z-10 flex min-w-0 items-stretch bg-[linear-gradient(#6ea9ae,#98c1c3_50%,#3b828b_50%,#2d747d)]">
        <button type="button" aria-label="Inicio" className="flex w-[42px] shrink-0 items-center pl-2">
          <svg width="23" height="22" viewBox="0 0 23 22" fill="#fff" aria-hidden="true">
            <path d="M0 3.500l9.500-1.400v8.400H0zM10.600 2L23 0v10.500H10.600zM0 11.500h9.500v8.400L0 18.500zM10.600 11.500H23V22l-12.400-2z" />
          </svg>
        </button>
        <div className="flex shrink-0 gap-[3px] py-px">
          {apps.map(([name, running]) => (
            <button
              key={name}
              type="button"
              aria-label={name}
              className={`flex w-[47px] items-center justify-center ${name === "Dinesat" ? "border border-white/80 bg-white/60" : running ? "border border-white/40 bg-white/20" : ""}`}
            >
              {name === "Dinesat" ? <D9 big /> : <AppIcon name={name} />}
            </button>
          ))}
        </div>
      </div>
      <div className="bg-[#4e929a]/70" />
      <div className="flex items-center justify-end gap-2 border-l-10 border-[#8fb9bd] bg-linear-to-r from-[#2c717d] to-[#34686c] pr-3.5 text-white">
        <svg width="7" height="5" viewBox="0 0 7 5" aria-hidden="true"><path d="M0 4.500L3.500 1 7 4.500z" fill="#fff" /></svg>
        <svg width="14" height="13" viewBox="0 0 14 13" fill="none" className="ml-1" aria-hidden="true">
          <path d="M3 0h6l3 4-1 6-4 2-6-3-1-5z" fill="#c8102e" />
          <path d="M3 8V3.500l2.500 2.500L8 3.500V8" stroke="#fff" strokeWidth="1.300" />
          <circle cx="10.500" cy="9.500" r="2.500" fill="#c9c9c9" stroke="#555" />
        </svg>
        <svg width="12" height="12" viewBox="0 0 12 12" fill="none" stroke="#fff" strokeWidth="1.200" aria-hidden="true">
          <path d="M4 2.500h7.500v6H3M7.500 8.500v2.500M5 11h5M.500 1h3v3h-3zM2 4v7" />
        </svg>
        <svg width="13" height="12" viewBox="0 0 13 12" fill="none" aria-hidden="true">
          <path d="M0 4h2.500L6 1v10L2.500 8H0z" fill="#fff" />
          <path d="M8 4q1.500 2 0 4M9.500 2.500q3 3.500 0 7M11 1q4 5 0 10" stroke="#fff" />
        </svg>
        <span className="ml-1 text-[9px]">ESP</span>
        <time className="ml-1.5 text-center font-['Open_Sans','Noto_Sans',sans-serif] text-[9px] leading-[13px]">
          07:11 p.m.
          <br />
          07-08-2021
        </time>
      </div>
    </footer>
  );
}

export default function App() {
  return (
    <div className={`relative flex h-screen flex-col overflow-hidden bg-[#2e727d] ${TAHOMA}`}>
      <SharedGradients />
      <TopBar />
      <main className="grid min-h-0 flex-1 grid-cols-[361fr_367fr_552fr] grid-rows-[minmax(0,1fr)]">
        <AdsWindow />
        <div className="flex min-h-0 min-w-0 flex-col overflow-hidden">
          <AssistantWindow />
          <MusicWindow />
        </div>
        <ExplorerWindow />
      </main>
      <div className={`pointer-events-none absolute right-14 bottom-16 z-20 text-white/40 ${SEGOE}`}>
        <p className="text-[15px] leading-5">Activar Windows</p>
        <p className="text-[11px] leading-4">Ir a Configuración de PC para activar Windows.</p>
      </div>
      <svg width="11" height="16" viewBox="0 0 11 16" className="pointer-events-none absolute top-[132px] right-[126px] z-20" aria-hidden="true">
        <path d="M.500 1v11.500L3.300 10l2 5 2-.800-2-4.700h4z" fill="#fff" stroke="#222" strokeWidth=".9" />
      </svg>
      <Taskbar />
    </div>
  );
}
